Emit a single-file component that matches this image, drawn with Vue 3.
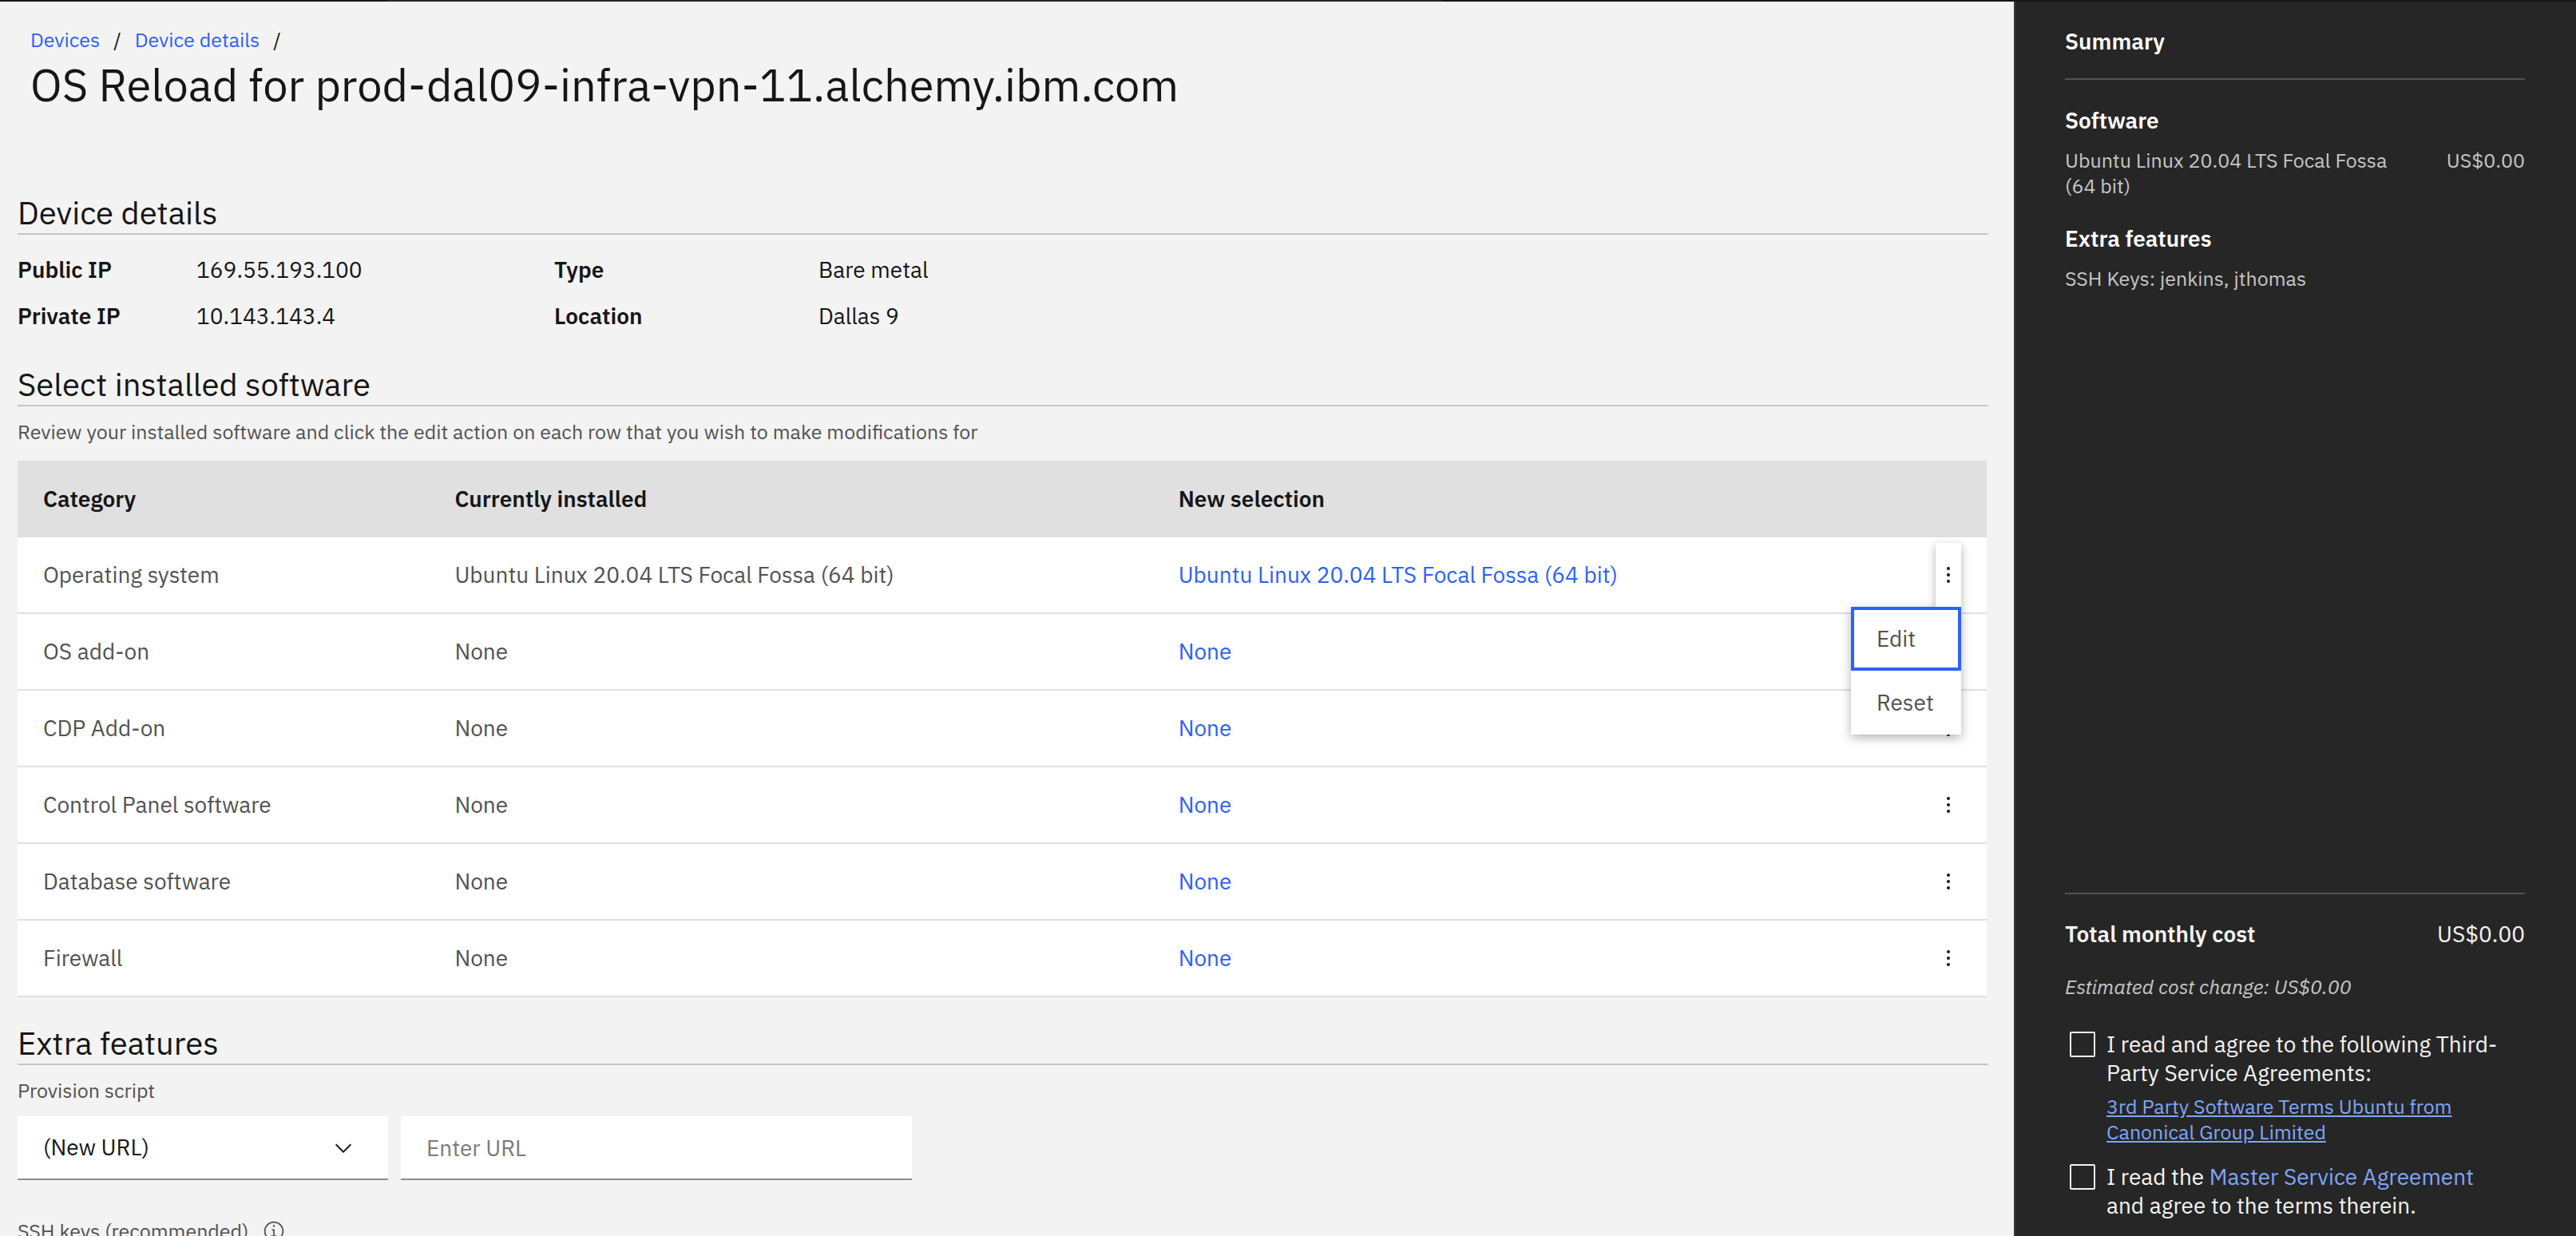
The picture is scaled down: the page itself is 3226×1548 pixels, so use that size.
<script setup>
import { ref } from 'vue'

const details = [
  ['Public IP', '169.55.193.100', 'Type', 'Bare metal'],
  ['Private IP', '10.143.143.4', 'Location', 'Dallas 9'],
]

const ubuntu = 'Ubuntu Linux 20.04 LTS Focal Fossa (64 bit)'

const rows = [
  { category: 'Operating system', current: ubuntu, next: ubuntu },
  { category: 'OS add-on', current: 'None', next: 'None' },
  { category: 'CDP Add-on', current: 'None', next: 'None' },
  { category: 'Control Panel software', current: 'None', next: 'None' },
  { category: 'Database software', current: 'None', next: 'None' },
  { category: 'Firewall', current: 'None', next: 'None' },
]

const openRow = ref(0)
const toggle = (index) => {
  openRow.value = openRow.value === index ? -1 : index
}
</script>

<template>
  <div class="page">
    <div class="strip"></div>
    <div class="columns">
      <main class="main">
        <nav class="breadcrumb" aria-label="Breadcrumb">
          <a href="#devices">Devices</a><span>/</span>
          <a href="#details">Device details</a><span>/</span>
        </nav>
        <h1>OS Reload for prod-dal09-infra-vpn-11.alchemy.ibm.com</h1>

        <h2>Device details</h2>
        <dl class="details">
          <template v-for="line in details" :key="line[0]">
            <dt>{{ line[0] }}</dt>
            <dd>{{ line[1] }}</dd>
            <dt>{{ line[2] }}</dt>
            <dd>{{ line[3] }}</dd>
          </template>
        </dl>

        <h2>Select installed software</h2>
        <p class="hint">Review your installed software and click the edit action on each row that you wish to make modifications for</p>
        <table>
          <colgroup>
            <col class="col-category" />
            <col class="col-current" />
            <col />
            <col class="col-action" />
          </colgroup>
          <thead>
            <tr>
              <th>Category</th>
              <th>Currently installed</th>
              <th>New selection</th>
              <th></th>
            </tr>
          </thead>
          <tbody>
            <tr v-for="(row, i) in rows" :key="row.category">
              <td>{{ row.category }}</td>
              <td>{{ row.current }}</td>
              <td class="next">{{ row.next }}</td>
              <td class="action">
                <div class="overflow">
                  <button
                    class="kebab"
                    :class="{ open: openRow === i }"
                    type="button"
                    aria-label="Row actions"
                    :aria-expanded="openRow === i"
                    @click="toggle(i)"
                  >
                    <svg width="32" height="32" viewBox="0 0 32 32" aria-hidden="true">
                      <circle cx="16" cy="8" r="2" />
                      <circle cx="16" cy="16" r="2" />
                      <circle cx="16" cy="24" r="2" />
                    </svg>
                  </button>
                  <div v-if="openRow === i" class="menu">
                    <button type="button" class="active">Edit</button>
                    <button type="button">Reset</button>
                  </div>
                </div>
              </td>
            </tr>
          </tbody>
        </table>

        <h2>Extra features</h2>
        <label class="field-label" for="script">Provision script</label>
        <div class="fields">
          <div class="select">
            <select id="script">
              <option>(New URL)</option>
            </select>
            <svg width="32" height="32" viewBox="0 0 16 16" aria-hidden="true">
              <path d="M8 11L3 6 3.7 5.3 8 9.6 12.3 5.3 13 6z" />
            </svg>
          </div>
          <input type="text" placeholder="Enter URL" aria-label="Provision script URL" />
        </div>
        <div class="field-label ssh">
          <span>SSH keys (recommended)</span>
          <button type="button" class="info" aria-label="About SSH keys">
            <svg width="28" height="28" viewBox="0 0 16 16" aria-hidden="true">
              <path d="M8.5 11V6.5H6.5V7.5H7.5V11H6V12H10V11zM8 3.5A.75.75 0 1 0 8 5 .75.75 0 0 0 8 3.5z" />
              <path fill-rule="evenodd" d="M8 15a7 7 0 1 1 7-7 7 7 0 0 1-7 7zM8 2a6 6 0 1 0 6 6A6 6 0 0 0 8 2z" />
            </svg>
          </button>
        </div>
      </main>

      <aside class="summary">
        <h3 class="title">Summary</h3>
        <h3>Software</h3>
        <div class="line">
          <span class="item">{{ ubuntu }}</span>
          <span>US$0.00</span>
        </div>
        <h3>Extra features</h3>
        <div class="line"><span>SSH Keys: jenkins, jthomas</span></div>

        <div class="total">
          <strong>Total monthly cost</strong>
          <span>US$0.00</span>
        </div>
        <p class="estimate">Estimated cost change: US$0.00</p>
        <div class="agree">
          <input id="third-party" type="checkbox" />
          <div>
            <label for="third-party">I read and agree to the following Third-Party Service Agreements:</label>
            <a class="terms" href="#terms">3rd Party Software Terms Ubuntu from Canonical Group Limited</a>
          </div>
        </div>
        <div class="agree">
          <input id="master" type="checkbox" />
          <label for="master">I read the <a href="#master-agreement">Master Service Agreement</a> and agree to the terms therein.</label>
        </div>
      </aside>
    </div>
  </div>
</template>

<style>
body {
  background: #f3f3f3;
}
</style>

<style scoped>
.page {
  display: flex;
  flex-direction: column;
  height: 100vh;
  overflow: hidden;
  font-family: "IBM Plex Sans", "Noto Sans", sans-serif;
  font-size: 28px;
  line-height: 36px;
  color: #161616;
  background: #f3f3f3;
}
.page * {
  box-sizing: border-box;
}
h1, h2, h3, p, dl, dd {
  margin: 0;
}
button, input, select {
  margin: 0;
  font: inherit;
  border-radius: 0;
}
a {
  color: #2d61f4;
  text-decoration: none;
}
.strip {
  flex: none;
  height: 2px;
  background: linear-gradient(90deg, #161616 15%, #262626 15%, #262626 56%, #161616 56%);
}
.columns {
  flex: 1;
  display: flex;
  min-height: 0;
}
.main {
  flex: 1;
  min-width: 0;
  padding: 32px 32px 0 22px;
  overflow: hidden;
}
.breadcrumb {
  display: flex;
  padding-left: 16px;
  font-size: 25px;
  line-height: 32px;
}
.breadcrumb span {
  margin: 0 17px;
}
h1 {
  margin: 4px 0 98px;
  padding-left: 16px;
  font-size: 56px;
  font-weight: 400;
  line-height: 72px;
}
h2 {
  border-bottom: 2px solid #c6c6c6;
  font-size: 40px;
  font-weight: 400;
  line-height: 52px;
}
.details {
  display: grid;
  grid-template-columns: 224px 448px 331px 1fr;
  row-gap: 22px;
  margin: 26px 0 41px;
}
.details dt {
  font-weight: 600;
}
.hint, .field-label {
  font-size: 25px;
  line-height: 32px;
  color: #525252;
}
.hint {
  margin: 16px 0 20px;
}
table {
  width: calc(100% - 2px);
  margin-bottom: 31px;
  table-layout: fixed;
  border-collapse: separate;
  border-spacing: 0;
}
.col-category {
  width: 20.9%;
}
.col-current {
  width: 36.75%;
}
.col-action {
  width: 96px;
}
th, td {
  height: 96px;
  padding: 0 32px;
  text-align: left;
}
th {
  background: #e0e0e0;
  font-weight: 600;
}
td {
  border-bottom: 2px solid #e0e0e0;
  background: #fff;
  color: #525252;
}
.next {
  color: #2d61f4;
}
.overflow {
  position: relative;
  width: 32px;
  height: 80px;
}
.kebab {
  display: flex;
  align-items: center;
  width: 32px;
  height: 80px;
  padding: 0;
  border: 0;
  background: transparent;
  fill: #161616;
}
.kebab.open {
  background: #fff;
  box-shadow: 0 4px 12px rgba(0, 0, 0, 0.3);
}
.menu {
  position: absolute;
  z-index: 1;
  top: 80px;
  right: 0;
  width: 138px;
  background: #fff;
  box-shadow: 0 4px 12px rgba(0, 0, 0, 0.3);
}
.kebab.open + .menu::before {
  content: "";
  position: absolute;
  right: 0;
  bottom: 100%;
  width: 32px;
  height: 20px;
  background: #fff;
}
.menu button {
  display: block;
  width: 100%;
  height: 80px;
  padding: 0 28px;
  border: 4px solid #fff;
  background: #fff;
  color: #525252;
  text-align: left;
}
.menu .active {
  border-color: #2a61ff;
}
.field-label {
  display: block;
  margin: 16px 0;
}
.fields {
  display: flex;
  gap: 16px;
}
.select {
  position: relative;
  width: 464px;
}
.select select,
.fields input {
  width: 100%;
  height: 80px;
  padding: 0 32px;
  border: 0;
  border-bottom: 2px solid #8d8d8d;
  background: #fff;
  color: #161616;
  appearance: none;
}
.fields input {
  width: 640px;
}
.fields input::placeholder {
  color: #7a7a7a;
  opacity: 1;
}
.select svg {
  position: absolute;
  top: 24px;
  right: 40px;
  fill: #161616;
}
.ssh {
  display: flex;
  align-items: center;
  gap: 18px;
  margin-top: 48px;
}
.info {
  display: flex;
  padding: 0;
  border: 0;
  background: transparent;
  fill: #525252;
}
.summary {
  display: flex;
  flex: none;
  flex-direction: column;
  width: 704px;
  padding: 32px 64px 20px 62px;
  border-left: 2px solid #393939;
  background: #262626;
  color: #f4f4f4;
}
.summary h3 {
  margin-bottom: 16px;
  font-size: 28px;
  font-weight: 600;
  line-height: 36px;
  color: #fff;
}
.summary .title {
  margin-bottom: 33px;
  padding-bottom: 28px;
  border-bottom: 2px solid #525252;
}
.line {
  display: flex;
  justify-content: space-between;
  margin-bottom: 32px;
  font-size: 25px;
  line-height: 32px;
  color: #c6c6c6;
}
.item {
  width: 432px;
}
.total {
  display: flex;
  justify-content: space-between;
  margin-top: auto;
  padding-top: 32px;
  border-top: 2px solid #525252;
}
.total strong {
  font-weight: 600;
}
.estimate {
  margin: 32px 0 38px;
  font-size: 25px;
  font-style: italic;
  line-height: 32px;
  color: #c6c6c6;
}
.agree {
  display: flex;
  gap: 14px;
  padding-left: 6px;
}
.agree + .agree {
  margin-top: 22px;
}
.agree label {
  display: block;
  padding-right: 20px;
}
.agree input {
  flex: none;
  width: 32px;
  height: 32px;
  margin-top: 2px;
  border: 2px solid #f4f4f4;
  border-radius: 2px;
  background: transparent;
  appearance: none;
}
.agree input:checked {
  background: #f4f4f4;
}
.agree a {
  color: #7ea6fb;
}
.agree .terms {
  display: block;
  margin-top: 8px;
  font-size: 25px;
  line-height: 32px;
  text-decoration: underline;
}
</style>
